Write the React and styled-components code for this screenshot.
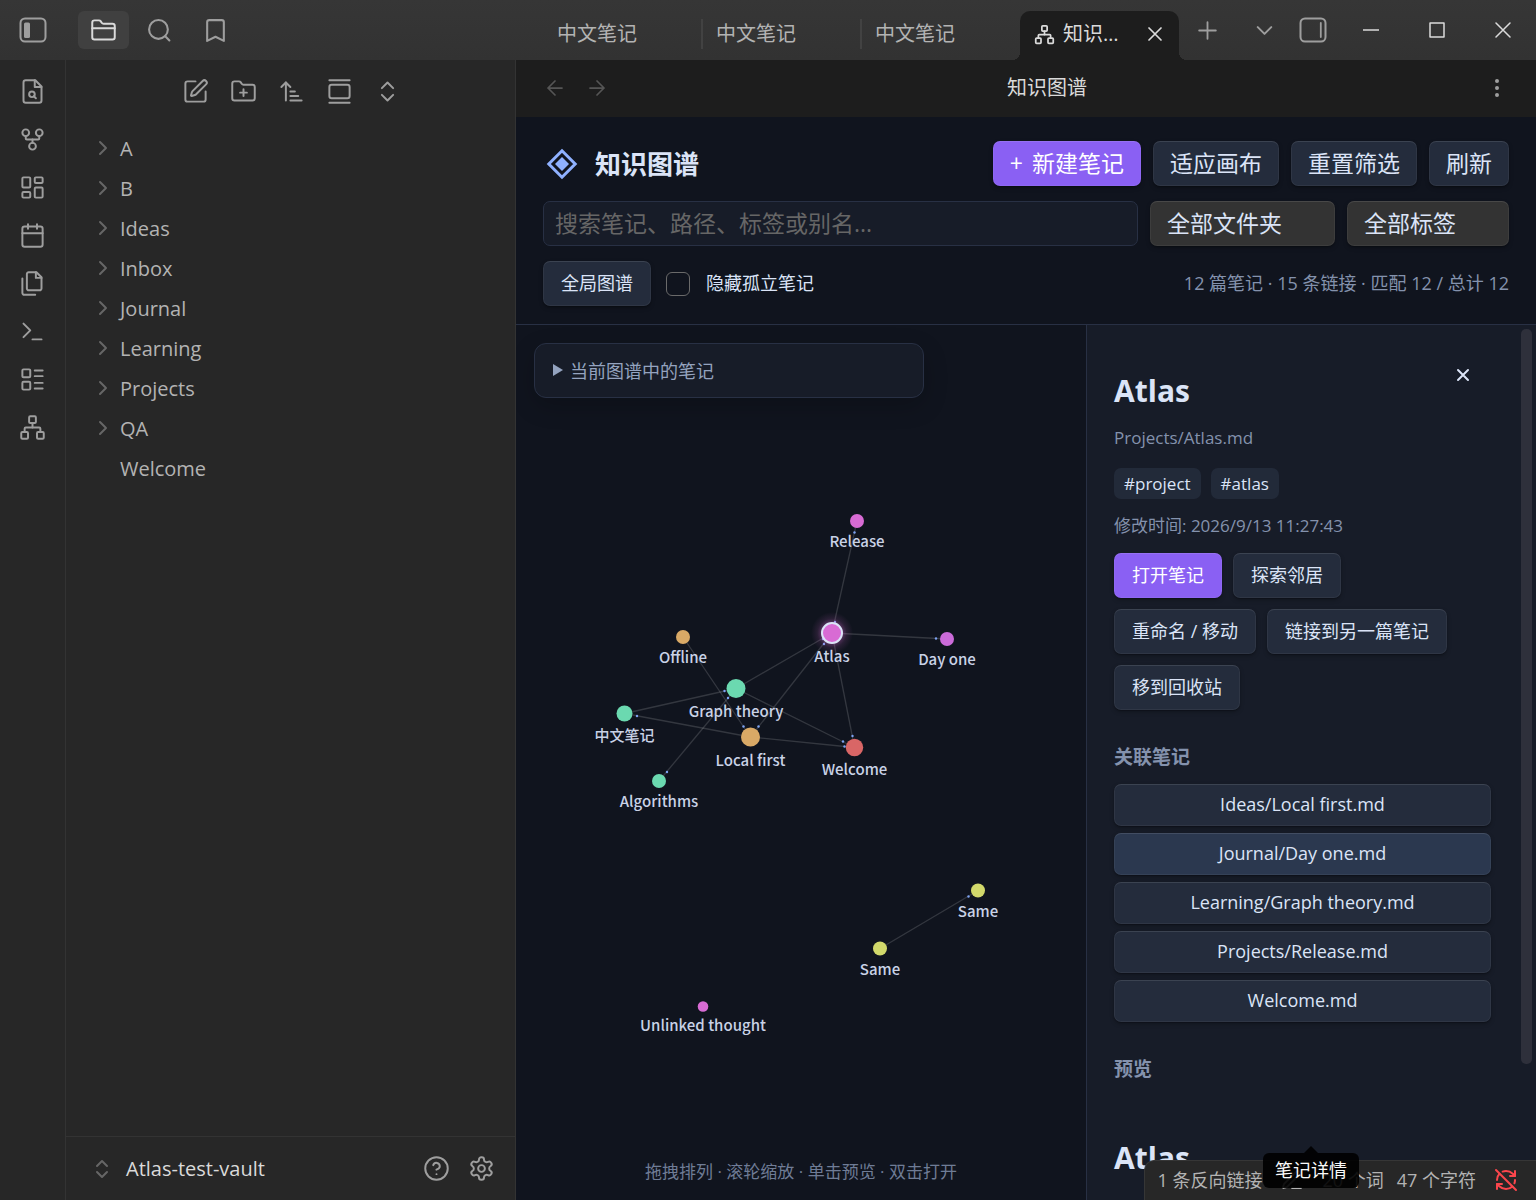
import React from "react";
import styled, { createGlobalStyle, css } from "styled-components";

const GlobalStyle = createGlobalStyle`
  *, *::before, *::after { box-sizing: border-box; }
  html, body { margin: 0; background: #1e1e1e; }
  body, button, input, select {
    font-family: "Open Sans", "Noto Sans CJK SC", sans-serif;
  }
  button { border: 0; padding: 0; background: none; color: inherit; cursor: pointer; }
  h1, h2, h3, p, ul { margin: 0; padding: 0; }
  ul { list-style: none; }
`;

/* ---------- icons ---------- */

const ICONS = {
  folder: <><path d="M20 20a2 2 0 0 0 2-2V8a2 2 0 0 0-2-2h-7.900a2 2 0 0 1-1.690-.9L9.600 3.900A2 2 0 0 0 7.930 3H4a2 2 0 0 0-2 2v13a2 2 0 0 0 2 2Z" /><path d="M2 10h20" /></>,
  search: <><circle cx="11" cy="11" r="9" /><path d="m21.500 21.500-4-4" /></>,
  bookmark: <path d="m20 22-8-4-8 4V4a2 2 0 0 1 2-2h12a2 2 0 0 1 2 2v18z" />,
  fileSearch: <><path d="M14.500 2H6a2 2 0 0 0-2 2v16a2 2 0 0 0 2 2h12a2 2 0 0 0 2-2V7.500L14.500 2z" /><path d="M14 2v6h6" /><circle cx="11.500" cy="14.500" r="2.500" /><path d="M13.250 16.250 15 18" /></>,
  fork: <><circle cx="12" cy="18" r="3" /><circle cx="6" cy="6" r="3" /><circle cx="18" cy="6" r="3" /><path d="M18 9v2c0 .6-.4 1-1 1H7c-.6 0-1-.4-1-1V9" /><path d="M12 12v3" /></>,
  dashboard: <><rect width="7" height="9" x="3" y="3" rx="1" /><rect width="7" height="5" x="14" y="3" rx="1" /><rect width="7" height="9" x="14" y="12" rx="1" /><rect width="7" height="5" x="3" y="16" rx="1" /></>,
  calendar: <><path d="M8 2v4M16 2v4" /><rect width="18" height="18" x="3" y="4" rx="2" /><path d="M3 10h18" /></>,
  files: <><path d="M15.500 2H8.600c-.4 0-.8.200-1.100.5-.3.300-.5.700-.5 1.100v12.800c0 .4.200.8.500 1.100.3.300.7.500 1.100.5h9.800c.4 0 .8-.2 1.100-.5.300-.3.500-.7.500-1.100V6.500L15.500 2z" /><path d="M3 7.600v12.800c0 .4.200.8.500 1.100.3.300.7.500 1.100.5h9.800" /><path d="M15 2v5h5" /></>,
  terminal: <><path d="m4 17 6-6-6-6" /><path d="M12 19h8" /></>,
  list: <><rect width="7" height="7" x="3" y="3" rx="1" /><rect width="7" height="7" x="3" y="14" rx="1" /><path d="M14 4h7M14 9h7M14 15h7M14 20h7" /></>,
  network: <><rect x="16" y="16" width="6" height="6" rx="1" /><rect x="2" y="16" width="6" height="6" rx="1" /><rect x="9" y="2" width="6" height="6" rx="1" /><path d="M5 16v-3a1 1 0 0 1 1-1h12a1 1 0 0 1 1 1v3" /><path d="M12 12V8" /></>,
  edit: <><path d="M12 3H5a2 2 0 0 0-2 2v14a2 2 0 0 0 2 2h14a2 2 0 0 0 2-2v-7" /><path d="M18.375 2.625a1 1 0 0 1 3 3l-9.013 9.014a2 2 0 0 1-.853.505l-2.873.840a.5.500 0 0 1-.62-.62l.840-2.873a2 2 0 0 1 .506-.852z" /></>,
  folderPlus: <><path d="M12 10v6M9 13h6" /><path d="M20 20a2 2 0 0 0 2-2V8a2 2 0 0 0-2-2h-7.900a2 2 0 0 1-1.690-.9L9.600 3.900A2 2 0 0 0 7.930 3H4a2 2 0 0 0-2 2v13a2 2 0 0 0 2 2Z" /></>,
  sort: <><path d="m3 8 4-4 4 4" /><path d="M7 4v16M11 12h4M11 16h7M11 20h10" /></>,
  gallery: <><path d="M3 2h18" /><rect width="18" height="12" x="3" y="6" rx="2" /><path d="M3 22h18" /></>,
  upDown: <><path d="m7 15 5 5 5-5" /><path d="m7 9 5-5 5 5" /></>,
  chevronRight: <path d="m9 18 6-6-6-6" />,
  chevronDown: <path d="m6 9 6 6 6-6" />,
  close: <path d="M18 6 6 18M6 6l12 12" />,
  plus: <path d="M4 12h16M12 4v16" />,
  back: <path d="m12 19-7-7 7-7M19 12H5" />,
  forward: <path d="M5 12h14M12 5l7 7-7 7" />,
  more: <><circle cx="12" cy="12" r="1" /><circle cx="12" cy="5" r="1" /><circle cx="12" cy="19" r="1" /></>,
  help: <><circle cx="12" cy="12" r="10" /><path d="M9.090 9a3 3 0 0 1 5.830 1c0 2-3 3-3 3" /><path d="M12 17h.01" /></>,
  settings: <><path d="M12.220 2h-.44a2 2 0 0 0-2 2v.18a2 2 0 0 1-1 1.730l-.43.250a2 2 0 0 1-2 0l-.15-.08a2 2 0 0 0-2.730.730l-.22.380a2 2 0 0 0 .73 2.730l.15.100a2 2 0 0 1 1 1.720v.51a2 2 0 0 1-1 1.740l-.15.090a2 2 0 0 0-.73 2.730l.22.380a2 2 0 0 0 2.730.730l.15-.08a2 2 0 0 1 2 0l.43.250a2 2 0 0 1 1 1.730V20a2 2 0 0 0 2 2h.44a2 2 0 0 0 2-2v-.18a2 2 0 0 1 1-1.730l.43-.25a2 2 0 0 1 2 0l.15.080a2 2 0 0 0 2.730-.73l.22-.39a2 2 0 0 0-.73-2.730l-.15-.08a2 2 0 0 1-1-1.740v-.5a2 2 0 0 1 1-1.740l.15-.09a2 2 0 0 0 .73-2.730l-.22-.38a2 2 0 0 0-2.730-.73l-.15.080a2 2 0 0 1-2 0l-.43-.25a2 2 0 0 1-1-1.730V4a2 2 0 0 0-2-2z" /><circle cx="12" cy="12" r="3" /></>,
  pencil: <><path d="M12 20h9" /><path d="M16.376 3.622a1 1 0 0 1 3.002 3.002L7.368 18.635a2 2 0 0 1-.855.506l-2.872.838a.5.500 0 0 1-.62-.62l.838-2.872a2 2 0 0 1 .506-.854z" /></>,
  syncOff: <><path d="M21 8 18.740 5.740A9.750 9.750 0 0 0 12 3c-1.170 0-2.300.200-3.350.570" /><path d="M21 3v5h-5" /><path d="M8 16H3v5" /><path d="M3 16l2.260 2.260A9.750 9.750 0 0 0 12 21c2.500 0 4.750-.97 6.400-2.500" /><path d="M3 12c0-2.400.9-4.600 2.500-6.200" /><path d="M21 12c0 1.200-.2 2.300-.6 3.300" /><path d="M2 2l20 20" /></>,
};

const Svg = styled.svg`
  display: block;
  flex: none;
  fill: none;
  stroke: currentColor;
  stroke-linecap: round;
  stroke-linejoin: round;
`;

const Icon = ({ name, size = 27, stroke = 1.75 }) => (
  <Svg width={size} height={size} viewBox="0 0 24 24" strokeWidth={stroke} aria-hidden="true">
    {ICONS[name]}
  </Svg>
);

const SidebarGlyph = ({ side }) => (
  <Svg width="28" height="26" viewBox="0 0 28 26" strokeWidth="2" aria-hidden="true">
    <rect x="1.500" y="1.500" width="25" height="23" rx="4.500" />
    {side === "left"
      ? <rect x="5" y="5.500" width="6" height="15.500" rx="1.500" fill="currentColor" stroke="none" />
      : <path d="M21.800 6v14" strokeWidth="1.800" />}
  </Svg>
);

/* ---------- window frame ---------- */

const Shell = styled.div`
  display: grid;
  grid-template-columns: 516px minmax(0, 1fr);
  grid-template-rows: 60px minmax(0, 1fr);
  height: 100vh;
  overflow: hidden;
  position: relative;
  color: #b3b3b3;
  font-size: 20px;
`;

const TitleBar = styled.header`
  grid-column: 1 / -1;
  display: grid;
  grid-template-columns: 516px minmax(0, 1fr);
  background: linear-gradient(#363636, #323232);
  color: #9e9e9e;
`;

const TitleLeft = styled.div`
  display: flex;
  align-items: center;
  padding-left: 19px;
`;

const PaneTabs = styled.nav`
  display: flex;
  gap: 5px;
  margin-left: 31px;
`;

const PaneTab = styled.button`
  display: grid;
  place-items: center;
  width: 51px;
  height: 38px;
  border-radius: 6px;
  background: ${(p) => (p.$active ? "#404040" : "transparent")};
  color: ${(p) => (p.$active ? "#dadada" : "#9e9e9e")};
`;

const TitleRight = styled.div`
  display: flex;
  align-items: stretch;
  padding-left: 27px;
  min-width: 0;
`;

const Tabs = styled.nav`
  display: flex;
  align-items: flex-end;
`;

const Tab = styled.button`
  position: relative;
  display: flex;
  align-items: center;
  width: 159px;
  height: 49px;
  padding: 0 14px 3px;
  font-size: 20px;
  line-height: 30px;
  color: #b3b3b3;

  &:not(:nth-last-child(-n + 2))::after {
    content: "";
    position: absolute;
    right: -1px;
    top: 8px;
    width: 2px;
    height: 30px;
    background: #424242;
  }

  ${(p) => p.$active && css`
    background: #1d1d1d;
    color: #dadada;
    border-radius: 10px 10px 0 0;
    gap: 8px;

    &::before, &::after {
      content: "";
      position: absolute;
      bottom: 0;
      width: 8px;
      height: 8px;
    }
    &::before { left: -8px; background: radial-gradient(circle at 0 0, transparent 8px, #1d1d1d 8px); }
    &::after { right: -8px; background: radial-gradient(circle at 100% 0, transparent 8px, #1d1d1d 8px); }
  `}
`;

const TabLabel = styled.span`
  width: 62px;
  overflow: hidden;
  text-overflow: ellipsis;
  white-space: nowrap;
  text-align: left;
`;

const TabClose = styled.span`
  margin-left: auto;
  margin-right: -2px;
`;

const BarButton = styled.button`
  display: grid;
  place-items: center;
  width: ${(p) => p.$w}px;
  color: ${(p) => p.$color || "#9e9e9e"};
`;

const Spacer = styled.div`flex: 1;`;

/* ---------- left side ---------- */

const LeftSide = styled.aside`
  display: grid;
  grid-template-columns: 66px minmax(0, 1fr);
  background: #272727;
  border-right: 1px solid #333;
  min-height: 0;
`;

const Ribbon = styled.nav`
  display: flex;
  flex-direction: column;
  align-items: center;
  padding-top: 7px;
  border-right: 1px solid #333;
  color: #9e9e9e;
`;

const IconButton = styled.button`
  display: grid;
  place-items: center;
  width: 48px;
  height: 48px;
`;

const Explorer = styled.div`
  display: flex;
  flex-direction: column;
  min-height: 0;
`;

const ExplorerTools = styled.div`
  display: flex;
  justify-content: center;
  padding: 7px 0 0 2px;
  color: #9e9e9e;
`;

const Tree = styled.ul`
  flex: 1;
  padding: 13px 16px 0 25px;
`;

const TreeItem = styled.button`
  display: flex;
  align-items: center;
  gap: 5px;
  width: 100%;
  height: 40px;
  padding-left: ${(p) => (p.$leaf ? "29px" : "0")};
  font-size: 20px;
  text-align: left;
  color: #b3b3b3;

  svg { color: #666; }
`;

const Vault = styled.footer`
  display: flex;
  align-items: center;
  height: 64px;
  padding: 0 20px 0 24px;
  border-top: 1px solid #333;
  color: #9e9e9e;
`;

const VaultName = styled.button`
  display: flex;
  align-items: center;
  gap: 12px;
  flex: 1;
  font-size: 20px;
  color: #dadada;

  svg { color: #666; }
`;

const FooterButtons = styled.div`
  display: flex;
  gap: 18px;
`;

/* ---------- main view ---------- */

const Main = styled.main`
  display: flex;
  flex-direction: column;
  min-width: 0;
  min-height: 0;
  background: #10141e;
`;

const ViewHeader = styled.div`
  display: flex;
  align-items: center;
  height: 57px;
  padding: 0 27px 1px;
  background: #1d1d1d;
  color: #9e9e9e;
`;

const ViewTitle = styled.h1`
  flex: 1;
  text-align: center;
  font-size: 20px;
  font-weight: 400;
  line-height: 30px;
  color: #dadada;
`;

const NavButtons = styled.div`
  display: flex;
  gap: 18px;
  color: #555;
`;

const Controls = styled.section`
  display: flex;
  flex-direction: column;
  gap: 15px;
  padding: 24px 27px 18px;
  border-bottom: 1px solid #283044;
`;

const ControlRow = styled.div`
  display: flex;
  align-items: center;
  gap: ${(p) => p.$gap || 12}px;
`;

const Brand = styled.h2`
  display: flex;
  align-items: center;
  gap: 17px;
  flex: 1;
  padding-left: 3px;
  font-size: 26px;
  font-weight: 700;
  line-height: 40px;
  color: #dbe4f7;
`;

const raised = css`
  box-shadow:
    inset 0 0 0 1px rgba(255, 255, 255, 0.05),
    inset 0 2px 1px -1px rgba(255, 255, 255, 0.07),
    0 2px 4px rgba(0, 0, 0, 0.25),
    0 1px 1px rgba(0, 0, 0, 0.2);
`;

const Button = styled.button`
  display: flex;
  align-items: center;
  gap: 9px;
  height: 45px;
  padding: 0 ${(p) => (p.$large ? 17 : 18)}px 2px;
  border-radius: 7px;
  font-size: ${(p) => (p.$large ? 23 : 18)}px;
  line-height: 32px;
  white-space: nowrap;
  color: ${(p) => (p.$primary ? "#fff" : "#dbe4f7")};
  background: ${(p) => (p.$primary ? "#8a60f3" : "#242c3c")};
  ${raised}
`;

const SearchInput = styled.input`
  flex: 1;
  min-width: 0;
  height: 45px;
  padding: 0 11px 2px;
  border: 1px solid #283044;
  border-radius: 7px;
  outline: 0;
  background: #171c28;
  color: #dbe4f7;
  font-size: 23px;

  &::placeholder { color: #666; opacity: 1; }
`;

const Select = styled.select`
  appearance: none;
  height: 45px;
  padding: 0 53px 2px 17px;
  border: 0;
  border-radius: 7px;
  background: #333;
  color: #dbe4f7;
  font-size: 23px;
  ${raised}
`;

const CheckLabel = styled.label`
  display: flex;
  align-items: center;
  gap: 16px;
  font-size: 18px;
  line-height: 26px;
  color: #dbe4f7;
`;

const CheckText = styled.span`
  padding-bottom: 2px;
`;

const Checkbox = styled.input`
  appearance: none;
  width: 24px;
  height: 24px;
  margin: 0;
  border: 1px solid #6a6a6a;
  border-radius: 6px;
`;

const Stats = styled.p`
  margin-left: auto;
  padding-bottom: 2px;
  font-size: 18px;
  line-height: 26px;
  color: #8492ad;
`;

const Body = styled.div`
  flex: 1;
  display: grid;
  grid-template-columns: minmax(0, 1fr) 450px;
  min-height: 0;
`;

const Canvas = styled.section`
  position: relative;
  min-width: 0;
  overflow: hidden;
`;

const GraphSvg = styled.svg`
  position: absolute;
  inset: 0;
  width: 100%;
  height: 100%;
`;

const NodeLabel = styled.text`
  font-family: "Noto Sans CJK SC", sans-serif;
  font-size: 15px;
  font-weight: 500;
  text-anchor: middle;
  fill: #c9d2e6;
`;

const NoteList = styled.details`
  position: absolute;
  top: 18px;
  left: 18px;
  width: 390px;
  border: 1px solid #283044;
  border-radius: 12px;
  background: #171c28;
  box-shadow: 0 8px 24px rgba(0, 0, 0, 0.2);
`;

const NoteSummary = styled.summary`
  display: flex;
  align-items: center;
  gap: 7px;
  height: 53px;
  padding: 0 18px 1px;
  font-size: 18px;
  color: #94a3bf;
  cursor: pointer;

  &::before {
    content: "";
    border-left: 10px solid #94a3bf;
    border-top: 6px solid transparent;
    border-bottom: 6px solid transparent;
  }
`;

const Hint = styled.p`
  position: absolute;
  left: 0;
  right: 0;
  bottom: 16px;
  text-align: center;
  font-size: 17px;
  line-height: 25px;
  color: #6f7c96;
`;

/* ---------- details panel ---------- */

const Detail = styled.aside`
  position: relative;
  min-height: 0;
  padding: 36px 45px 0 27px;
  overflow: hidden;
  border-left: 1px solid #283044;
  background: #171c28;
  color: #8492ad;
`;

const Thumb = styled.div`
  position: absolute;
  top: 4px;
  right: 4px;
  width: 11px;
  height: 84%;
  border-radius: 5px;
  background: #2e303b;
`;

const DetailHead = styled.div`
  display: flex;
  justify-content: space-between;
  align-items: flex-start;
`;

const NoteTitle = styled.h2`
  font-size: 30px;
  font-weight: 700;
  line-height: 60px;
  color: #dbe4f7;
`;

const CloseButton = styled.button`
  display: grid;
  place-items: center;
  width: 56px;
  height: 28px;
  color: #dbe4f7;
`;

const Meta = styled.p`
  margin-top: ${(p) => p.$top}px;
  font-size: 17px;
  line-height: 24px;
`;

const Tags = styled.ul`
  display: flex;
  gap: 10px;
  margin-top: 18px;
`;

const Tag = styled.li`
  padding: 0 10px;
  border-radius: 7px;
  background: #222a39;
  color: #dbe4f7;
  font-size: 17px;
  line-height: 31px;
`;

const Actions = styled.div`
  display: flex;
  flex-wrap: wrap;
  gap: 11px;
  margin-top: 15px;
`;

const SectionTitle = styled.h3`
  margin-top: 34px;
  font-size: 19px;
  font-weight: 700;
  line-height: 26px;
  color: #8492ad;
`;

const Links = styled.div`
  display: flex;
  flex-direction: column;
  gap: 7px;
  margin-top: 14px;
`;

const LinkButton = styled.button`
  height: 42px;
  padding-bottom: 2px;
  border-radius: 7px;
  font-size: 18px;
  color: #dbe4f7;
  background: ${(p) => (p.$active ? "#2b384f" : "#242c3c")};
  ${raised}
`;

const Preview = styled.article`
  margin-top: 46px;
`;

/* ---------- overlays ---------- */

const StatusBar = styled.footer`
  position: absolute;
  right: 0;
  bottom: 0;
  display: flex;
  align-items: center;
  height: 40px;
  padding: 0 18px 1px 13px;
  border-top: 1px solid #363636;
  border-left: 1px solid #363636;
  border-top-left-radius: 10px;
  background: #272727;
  font-size: 18px;
  line-height: 26px;
  color: #b3b3b3;
`;

const StatusItem = styled.span`
  margin-right: ${(p) => p.$gap || 13}px;
`;

const SyncIcon = styled.span`
  color: #fb464c;
`;

const Tooltip = styled.div`
  position: absolute;
  right: 177px;
  bottom: 12px;
  padding: 0 12px;
  border-radius: 6px;
  background: rgba(0, 0, 0, 0.9);
  color: #fafafa;
  font-size: 18px;
  line-height: 35px;

  &::before {
    content: "";
    position: absolute;
    left: 50%;
    bottom: 100%;
    margin-left: -7px;
    border: 7px solid transparent;
    border-top: 0;
    border-bottom-color: rgba(0, 0, 0, 0.9);
  }
`;

/* ---------- data ---------- */

const ribbon = [
  ["fileSearch", "快速切换"], ["fork", "关系图谱"], ["dashboard", "白板"], ["calendar", "日记"],
  ["files", "模板"], ["terminal", "命令面板"], ["list", "数据库"], ["network", "知识图谱"],
];
const tools = [
  ["edit", "新建笔记"], ["folderPlus", "新建文件夹"], ["sort", "排序"], ["gallery", "自动定位"], ["upDown", "全部展开"],
];
const tree = ["A", "B", "Ideas", "Inbox", "Journal", "Learning", "Projects", "QA"];

const PINK = "#d86bd4";
const ORANGE = "#d9a966";
const GREEN = "#6bd9b0";
const YELLOW = "#d2d96b";

const nodes = [
  { x: 857, y: 521, r: 7, c: PINK, label: "Release" },
  { x: 832, y: 633, r: 10, c: PINK, label: "Atlas", selected: true },
  { x: 947, y: 639, r: 7, c: "#cb6bd9", label: "Day one" },
  { x: 683, y: 637, r: 7, c: ORANGE, label: "Offline" },
  { x: 736, y: 688.5, r: 9.5, c: GREEN, label: "Graph theory" },
  { x: 750.5, y: 737, r: 9.5, c: ORANGE, label: "Local first" },
  { x: 854.5, y: 747.5, r: 8.7, c: "#d96666", label: "Welcome" },
  { x: 624.5, y: 713.5, r: 8, c: GREEN, label: "中文笔记" },
  { x: 659, y: 781, r: 7, c: GREEN, label: "Algorithms" },
  { x: 978, y: 890.5, r: 7, c: YELLOW, label: "Same" },
  { x: 880, y: 948.5, r: 7, c: YELLOW, label: "Same" },
  { x: 703, y: 1006.5, r: 5.3, c: PINK, label: "Unlinked thought" },
];
const edges = [[0, 1], [1, 2], [1, 4], [1, 5], [1, 6], [3, 5], [4, 7], [4, 6], [5, 7], [5, 6], [4, 8], [9, 10]];
const arrows = [
  [854.5, 532.5], [835, 622], [936, 638.5], [823, 639], [824, 644], [724.5, 691], [728, 698],
  [637, 716], [667, 772], [743.5, 726.5], [758.5, 726.5], [852.5, 736], [843, 741.5], [844.5, 746.5], [968.5, 896.5],
];
const related = ["Ideas/Local first.md", "Journal/Day one.md", "Learning/Graph theory.md", "Projects/Release.md", "Welcome.md"];

const Graph = () => (
  <GraphSvg viewBox="516 325 570 875" role="img" aria-label="知识图谱">
    <defs>
      <radialGradient id="glow">
        <stop offset="45%" stopColor={PINK} stopOpacity="0.38" />
        <stop offset="70%" stopColor={PINK} stopOpacity="0.12" />
        <stop offset="100%" stopColor={PINK} stopOpacity="0" />
      </radialGradient>
    </defs>
    <g stroke="#fff" strokeOpacity="0.15" strokeWidth="1.300">
      {edges.map(([a, b]) => (
        <line key={`${a}-${b}`} x1={nodes[a].x} y1={nodes[a].y} x2={nodes[b].x} y2={nodes[b].y} />
      ))}
    </g>
    {arrows.map(([x, y]) => <circle key={`${x}-${y}`} cx={x} cy={y} r="1.200" fill="#7da2f2" />)}
    {nodes.map((n) => (
      <g key={`${n.label}-${n.x}`}>
        {n.selected && <circle cx={n.x} cy={n.y} r="21" fill="url(#glow)" />}
        <circle cx={n.x} cy={n.y} r={n.r} fill={n.c} stroke={n.selected ? "#dbe4f7" : "none"} strokeWidth="2" />
        <NodeLabel x={n.x} y={n.y + n.r + 19}>{n.label}</NodeLabel>
      </g>
    ))}
  </GraphSvg>
);

export default function App() {
  return (
    <Shell>
      <GlobalStyle />
      <TitleBar>
        <TitleLeft>
          <button aria-label="折叠左侧栏"><SidebarGlyph side="left" /></button>
          <PaneTabs>
            <PaneTab $active aria-label="文件列表"><Icon name="folder" /></PaneTab>
            <PaneTab aria-label="搜索"><Icon name="search" size={25} stroke={2} /></PaneTab>
            <PaneTab aria-label="书签"><Icon name="bookmark" size={25} stroke={2} /></PaneTab>
          </PaneTabs>
        </TitleLeft>
        <TitleRight>
          <Tabs>
            <Tab>中文笔记</Tab>
            <Tab>中文笔记</Tab>
            <Tab>中文笔记</Tab>
            <Tab $active>
              <Icon name="network" size={21} stroke={2} />
              <TabLabel>知识图谱</TabLabel>
              <TabClose><Icon name="close" size={24} /></TabClose>
            </Tab>
          </Tabs>
          <BarButton $w={57} aria-label="新标签页"><Icon name="plus" size={25} /></BarButton>
          <Spacer />
          <BarButton $w={48} aria-label="标签页列表"><Icon name="chevronDown" /></BarButton>
          <BarButton $w={50} aria-label="展开右侧栏"><SidebarGlyph side="right" /></BarButton>
          <BarButton $w={66} $color="#dadada" aria-label="最小化">
            <Svg width="16" height="16" viewBox="0 0 16 16" strokeWidth="1.500"><path d="M0 8h16" /></Svg>
          </BarButton>
          <BarButton $w={66} $color="#dadada" aria-label="最大化">
            <Svg width="16" height="16" viewBox="0 0 16 16" strokeWidth="1.500"><path d="M1 1h14v14H1z" /></Svg>
          </BarButton>
          <BarButton $w={66} $color="#dadada" aria-label="关闭">
            <Svg width="16" height="16" viewBox="0 0 16 16" strokeWidth="1.500"><path d="M1 1l14 14M15 1 1 15" /></Svg>
          </BarButton>
        </TitleRight>
      </TitleBar>

      <LeftSide>
        <Ribbon>
          {ribbon.map(([icon, label]) => (
            <IconButton key={icon} aria-label={label}><Icon name={icon} /></IconButton>
          ))}
        </Ribbon>
        <Explorer>
          <ExplorerTools>
            {tools.map(([icon, label]) => (
              <IconButton key={icon} aria-label={label}><Icon name={icon} /></IconButton>
            ))}
          </ExplorerTools>
          <Tree>
            {tree.map((name) => (
              <li key={name}>
                <TreeItem><Icon name="chevronRight" size={24} stroke={2} />{name}</TreeItem>
              </li>
            ))}
            <li><TreeItem $leaf>Welcome</TreeItem></li>
          </Tree>
          <Vault>
            <VaultName><Icon name="upDown" size={24} stroke={2} />Atlas-test-vault</VaultName>
            <FooterButtons>
              <button aria-label="帮助"><Icon name="help" /></button>
              <button aria-label="设置"><Icon name="settings" /></button>
            </FooterButtons>
          </Vault>
        </Explorer>
      </LeftSide>

      <Main>
        <ViewHeader>
          <NavButtons>
            <button aria-label="后退"><Icon name="back" size={24} /></button>
            <button aria-label="前进"><Icon name="forward" size={24} /></button>
          </NavButtons>
          <ViewTitle>知识图谱</ViewTitle>
          <button aria-label="更多选项"><Icon name="more" size={24} stroke={2} /></button>
        </ViewHeader>

        <Controls>
          <ControlRow>
            <Brand>
              <Svg width="32" height="32" viewBox="0 0 32 32" aria-hidden="true" color="#8fb1ff">
                <path d="M16 2.800 29.200 16 16 29.200 2.800 16z" strokeWidth="3" strokeLinejoin="miter" />
                <path d="M16 9 23 16 16 23 9 16z" fill="currentColor" stroke="none" />
              </Svg>
              知识图谱
            </Brand>
            <Button $large $primary><span>+</span>新建笔记</Button>
            <Button $large>适应画布</Button>
            <Button $large>重置筛选</Button>
            <Button $large>刷新</Button>
          </ControlRow>
          <ControlRow>
            <SearchInput type="text" aria-label="搜索" placeholder="搜索笔记、路径、标签或别名..." />
            <Select aria-label="文件夹"><option>全部文件夹</option></Select>
            <Select aria-label="标签"><option>全部标签</option></Select>
          </ControlRow>
          <ControlRow $gap={15}>
            <Button>全局图谱</Button>
            <CheckLabel><Checkbox type="checkbox" /><CheckText>隐藏孤立笔记</CheckText></CheckLabel>
            <Stats>12 篇笔记 · 15 条链接 · 匹配 12 / 总计 12</Stats>
          </ControlRow>
        </Controls>

        <Body>
          <Canvas>
            <Graph />
            <NoteList><NoteSummary>当前图谱中的笔记</NoteSummary></NoteList>
            <Hint>拖拽排列 · 滚轮缩放 · 单击预览 · 双击打开</Hint>
          </Canvas>
          <Detail>
            <DetailHead>
              <NoteTitle>Atlas</NoteTitle>
              <CloseButton aria-label="关闭详情">
                <Svg width="14" height="14" viewBox="0 0 14 14" strokeWidth="2"><path d="M2 2l10 10M12 2 2 12" /></Svg>
              </CloseButton>
            </DetailHead>
            <Meta $top={5}>Projects/Atlas.md</Meta>
            <Tags><Tag>#project</Tag><Tag>#atlas</Tag></Tags>
            <Meta $top={15}>修改时间: 2026/9/13 11:27:43</Meta>
            <Actions>
              <Button $primary>打开笔记</Button>
              <Button>探索邻居</Button>
              <Button>重命名 / 移动</Button>
              <Button>链接到另一篇笔记</Button>
              <Button>移到回收站</Button>
            </Actions>
            <SectionTitle>关联笔记</SectionTitle>
            <Links>
              {related.map((path) => (
                <LinkButton key={path} $active={path === "Journal/Day one.md"}>{path}</LinkButton>
              ))}
            </Links>
            <SectionTitle>预览</SectionTitle>
            <Preview><NoteTitle>Atlas</NoteTitle></Preview>
            <Thumb />
          </Detail>
        </Body>
      </Main>

      <StatusBar>
        <StatusItem $gap={18}>1 条反向链接</StatusItem>
        <StatusItem $gap={18}><Icon name="pencil" size={24} /></StatusItem>
        <StatusItem>20 个词</StatusItem>
        <StatusItem $gap={18}>47 个字符</StatusItem>
        <SyncIcon><Icon name="syncOff" size={24} stroke={2} /></SyncIcon>
      </StatusBar>
      <Tooltip role="tooltip">笔记详情</Tooltip>
    </Shell>
  );
}
